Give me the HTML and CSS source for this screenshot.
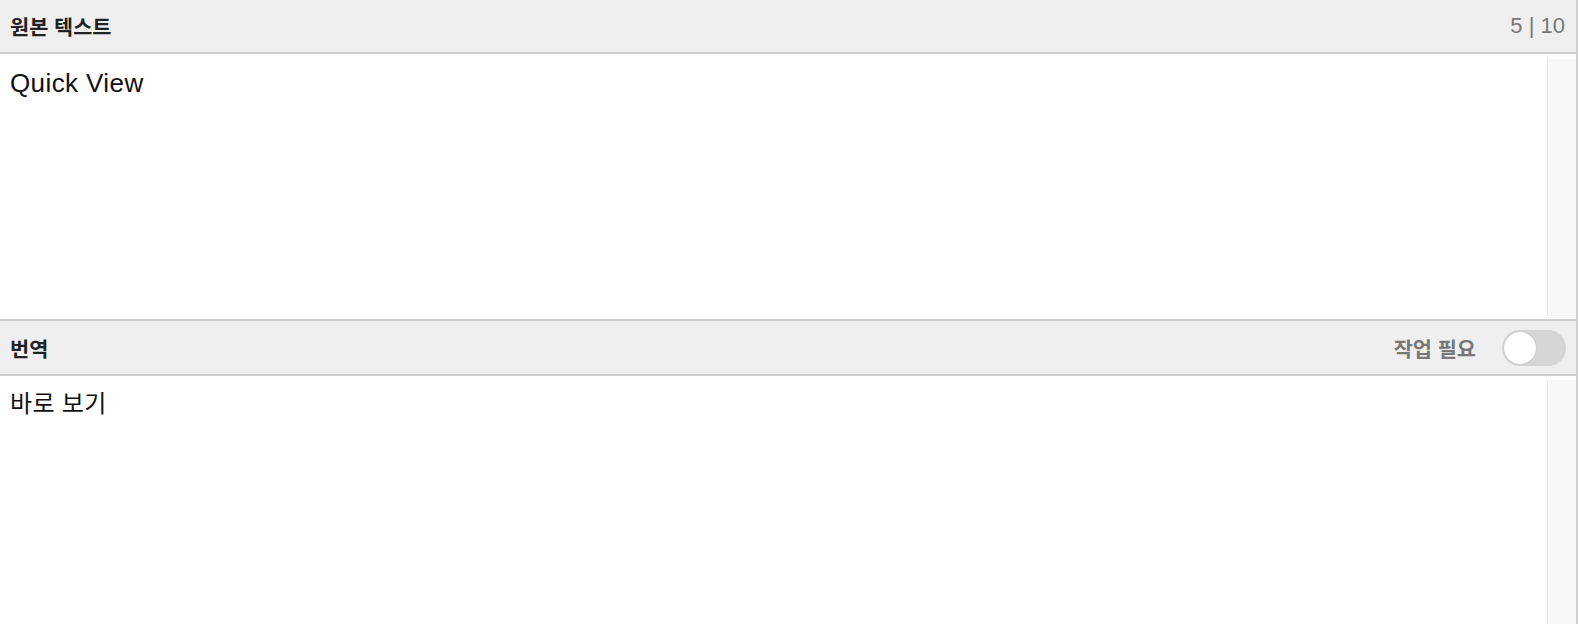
FILE: index.html
```html
<!DOCTYPE html>
<html lang="ko">
<head>
<meta charset="utf-8">
<link rel="stylesheet" href="styles.css">
</head>
<body>
<div class="page">
  <div class="bar bar-top">
    <span class="bar-title">원본 텍스트</span>
    <span class="counter">5 | 10</span>
  </div>
  <div class="pane pane-top">
    <div class="pane-text">Quick View</div>
    <div class="track"></div>
  </div>
  <div class="bar bar-mid">
    <span class="bar-title">번역</span>
    <div class="bar-right">
      <span class="status">작업 필요</span>
      <span class="toggle"><span class="knob"></span></span>
    </div>
  </div>
  <div class="pane pane-bottom">
    <div class="pane-text">바로 보기</div>
    <div class="track"></div>
  </div>
</div>
</body>
</html>
```
FILE: styles.css
```css
html, body {
  margin: 0;
  padding: 0;
  background: #fff;
  height: 100%;
  overflow: hidden;
}
.page {
  width: 1576px;
  height: 624px;
  border-right: 2px solid #cfcfcf;
  display: flex;
  flex-direction: column;
  font-family: "Liberation Sans", "Noto Sans CJK KR", sans-serif;
}
.bar {
  background: #efefef;
  border-bottom: 2px solid #cdcdcd;
  display: flex;
  align-items: center;
  justify-content: space-between;
  padding: 0 11px 0 10px;
  flex: none;
}
.bar-top {
  height: 52px;
}
.bar-mid {
  height: 53px;
  padding-right: 10px;
}
.bar-title {
  font-family: "Noto Sans CJK KR", sans-serif;
  font-weight: 700;
  font-size: 20.8px;
  color: #222;
}
.counter {
  font-size: 22px;
  color: #777;
  margin-top: -1px;
}
.bar-right {
  display: flex;
  align-items: center;
  gap: 26px;
}
.status {
  font-family: "Noto Sans CJK KR", sans-serif;
  font-weight: 700;
  font-size: 20.8px;
  color: #777;
}
.toggle {
  width: 60px;
  height: 32px;
  border: 2px solid #d4d4d4;
  border-radius: 18px;
  background: #d6d6d6;
  position: relative;
  display: block;
}
.knob {
  position: absolute;
  left: 0;
  top: 0;
  width: 32px;
  height: 32px;
  border-radius: 50%;
  background: #fff;
  box-shadow: 0 0 1px rgba(0,0,0,0.25);
}
.pane {
  display: flex;
  border-bottom: 2px solid #cdcdcd;
}
.pane-top {
  height: 265px;
  flex: none;
}
.pane-bottom {
  flex: 1;
  border-bottom: none;
}
.pane-text {
  flex: 1;
  padding: 14px 10px;
  font-size: 26px;
  letter-spacing: 0.4px;
  color: #111;
  font-family: "Liberation Sans", "Noto Sans CJK KR", sans-serif;
}
.pane-bottom .pane-text {
  font-family: "Noto Sans CJK KR", sans-serif;
  font-size: 24px;
  letter-spacing: 0.3px;
  padding-top: 8px;
}
.track {
  width: 28px;
  margin: 5px 0 3px;
  background: #f8f8f8;
  border-left: 1px solid #e8e8e8;
}
.pane-bottom .track {
  margin-top: 4px;
  margin-bottom: 0;
}
```
